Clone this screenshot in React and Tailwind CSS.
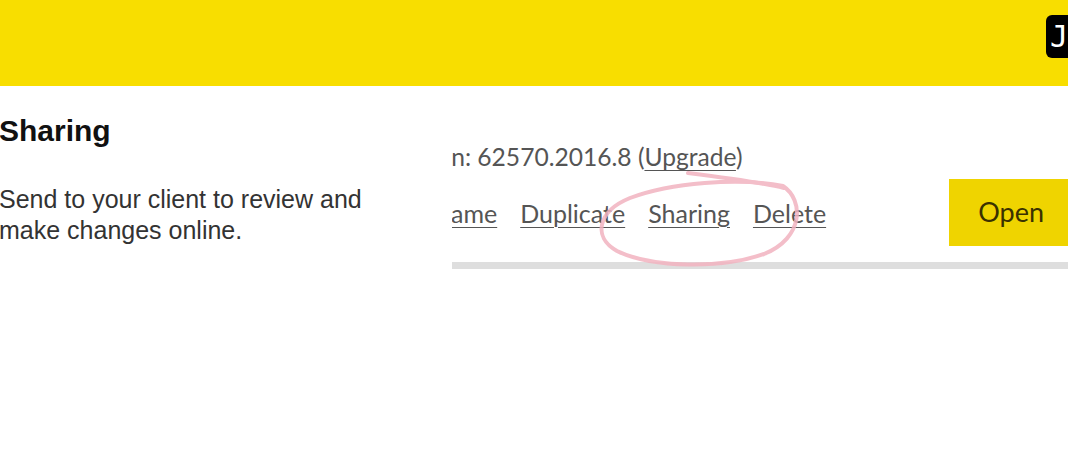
import React from "react";

export default function App() {
  return (
    <div className="relative w-[1068px] h-[450px] overflow-hidden bg-white">
      <header className="h-[86px] bg-[#f8de00] flex justify-end items-start pt-[15px]">
        <div className="w-[30px] h-[43px] mr-[-8px] bg-black rounded-[6px] flex items-center pl-[4px]">
          <span className="text-white text-[30px] leading-none" style={{ fontFamily: '"DejaVu Sans Mono", monospace' }}>J</span>
        </div>
      </header>
      <div className="flex">
        <div className="w-[452px] shrink-0" style={{ fontFamily: '"Liberation Sans", Arial, sans-serif' }}>
          <h1 className="mt-[27px] text-[30px] leading-[36px] font-bold text-[#111] ml-[-1px]">Sharing</h1>
          <p className="mt-[35px] text-[25px] leading-[31px] text-[#333] ml-[-1px]">
            Send to your client to review and
            <br />
            make changes online.
          </p>
        </div>
        <div className="flex-1 overflow-hidden" style={{ fontFamily: 'Lato, "Open Sans", sans-serif' }}>
          <div className="ml-[-70px]">
            <div className="mt-[56px] pl-[2px] text-[24.6px] leading-[30px] text-[#555] whitespace-nowrap">
              Version: 62570.2016.8 (<span className="underline underline-offset-[4px] decoration-1">Upgrade</span>)
            </div>
            <div className="mt-[7px] flex items-center">
              <div className="flex gap-[23px] pl-[27px] text-[25px] leading-[30px] text-[#555] whitespace-nowrap">
                <span className="underline underline-offset-[4px] decoration-1">Rename</span>
                <span className="underline underline-offset-[4px] decoration-1">Duplicate</span>
                <span className="underline underline-offset-[4px] decoration-1">Sharing</span>
                <span className="underline underline-offset-[4px] decoration-1">Delete</span>
              </div>
              <div className="ml-[123px] w-[124px] h-[67px] shrink-0 bg-[#efd400] flex items-center justify-center text-[27px] text-[#3a3100]">
                Open
              </div>
            </div>
            <div className="mt-[16px] h-[7px] bg-[#dedede]" />
          </div>
        </div>
      </div>
      <svg className="absolute left-0 top-0 pointer-events-none" width="1068" height="450">
        <g fill="none" stroke="#f2b3c0" strokeWidth="4" strokeLinecap="round" opacity="0.85">
          <path d="M 688 173 C 720 177, 760 182, 784 188" />
          <path d="M 783 186 C 804 200, 804 238, 764 254 C 722 269, 652 268, 617 251 C 592 237, 598 211, 630 198 C 670 183, 738 177, 783 186" />
        </g>
      </svg>
    </div>
  );
}
